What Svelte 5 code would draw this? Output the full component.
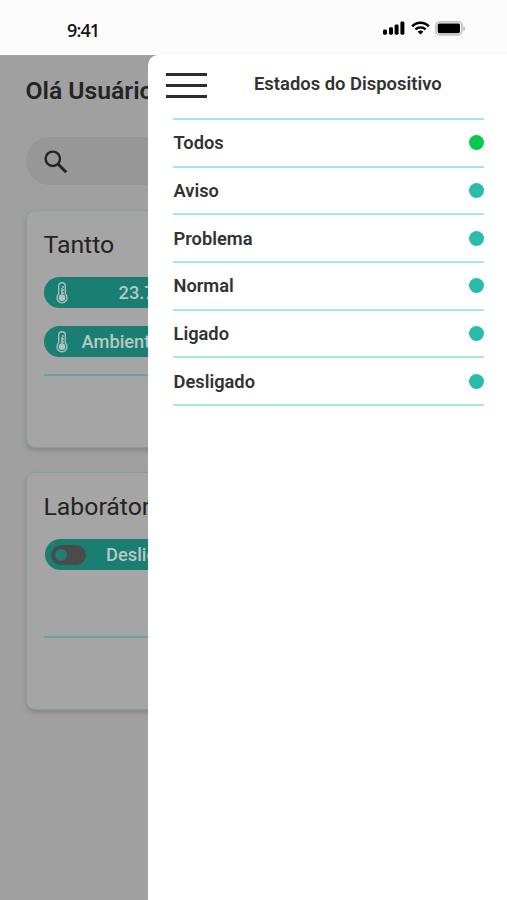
<script>
  const states = [
    { label: 'Todos', active: true },
    { label: 'Aviso' },
    { label: 'Problema' },
    { label: 'Normal' },
    { label: 'Ligado' },
    { label: 'Desligado' }
  ];
</script>

{#snippet thermometer()}
  <svg class="thermo" width="14" height="22" viewBox="0 0 14 22" fill="none">
    <path d="M3.7 12V4a3.3 3.3 0 0 1 6.6 0v8a5 5 0 1 1-6.6 0Z" stroke="#a3bfbb" stroke-width="1.4" />
    <circle cx="7" cy="15.7" r="3.3" fill="#b0c5c2" />
    <path d="M7 15V6M7 5h2M7 8h2M7 11h2" stroke="#a9c3bf" stroke-width="1.6" />
  </svg>
{/snippet}

<div class="phone">
  <header class="status">
    <span class="time">9:41</span>
    <div class="indicators">
      <svg width="22" height="14" viewBox="0 0 22 14">
        <rect x="0" y="8.5" width="4" height="5.2" rx="1.4" />
        <rect x="6" y="6.3" width="4" height="7.4" rx="1.4" />
        <rect x="11.6" y="3.6" width="4" height="10.1" rx="1.4" />
        <rect x="17.4" y="0.5" width="4" height="13.2" rx="1.4" />
      </svg>
      <svg class="wifi" width="19" height="14" viewBox="0 0 19 14" fill="none">
        <path d="M1.2 5.3C5.8 .6 13.2 .6 17.8 5.3" stroke="#000" stroke-width="2.5" />
        <path d="M4.4 8.4c2.9-2.8 7.3-2.8 10.2 0" stroke="#000" stroke-width="2.3" />
        <path d="M6.6 10.7c1.7-1.5 4.1-1.5 5.8 0L9.5 13.6Z" fill="#000" />
      </svg>
      <svg class="battery" width="31" height="15" viewBox="0 0 31 15">
        <rect x=".9" y=".9" width="26" height="13" rx="4" fill="#fff" stroke="#c4c4c4" stroke-width="1.8" />
        <rect x="2.7" y="2.6" width="22.3" height="9.6" rx="1.6" />
        <path d="M28.3 5.2c2.4.7 2.4 3.9 0 4.6Z" fill="#b4b4b4" />
      </svg>
    </div>
  </header>

  <div class="screen">
    <main>
      <h1>Olá Usuário</h1>
      <div class="search">
        <svg width="24" height="24" viewBox="0 0 24 24" fill="none" stroke="#242424">
          <circle cx="8.8" cy="8.8" r="7.2" stroke-width="2.4" />
          <path d="m14 14 8.2 8.2" stroke-width="3" />
        </svg>
      </div>
      <section class="card">
        <h2>Tantto</h2>
        <div class="pill">{@render thermometer()}<span class="reading">23.7 °C</span></div>
        <div class="pill">{@render thermometer()}<span class="ambient">Ambiente</span></div>
        <div class="rule"></div>
      </section>
      <section class="card lab">
        <h2>Laborátorio</h2>
        <div class="pill off"><i class="toggle"></i><span class="switch">Desligado</span></div>
        <div class="rule"></div>
      </section>
    </main>

    <aside>
      <div class="head">
        <button aria-label="Menu"><i></i><i></i><i></i></button>
        <h3>Estados do Dispositivo</h3>
      </div>
      <ul>
        {#each states as state}
          <li><span>{state.label}</span><i class:active={state.active}></i></li>
        {/each}
      </ul>
    </aside>
  </div>
</div>

<style>
  :global(body) { margin: 0; background: #fff; }
  * { box-sizing: border-box; }
  .phone { width: 507px; height: 900px; overflow: hidden; display: flex; flex-direction: column; font-family: Roboto, sans-serif; color: #242424; }
  .status { height: 55px; flex: none; background: #fcfcfc; display: flex; justify-content: space-between; padding: 0 41px 0 67px; }
  .time { font: 600 18px/24px "Open Sans", sans-serif; color: #151515; margin-top: 17.5px; letter-spacing: -0.9px; }
  .indicators { display: flex; margin-top: 20.5px; align-items: flex-start; }
  .wifi { margin-left: 5.5px; }
  .battery { margin-left: 5.5px; }
  .screen { position: relative; flex: 1; background: #a0a0a0; }
  main { padding: 22px 0 0 25.5px; }
  h1 { margin: 0; font-size: 24.7px; line-height: 28px; font-weight: 600; white-space: nowrap; }
  .search { height: 48px; margin-top: 32px; border-radius: 24px; background: #979797; padding: 13px 0 0 18px; width: 457px; }
  .search svg { display: block; }
  .card { width: 457px; height: 238px; margin-top: 25px; border: 1px solid #7fa3a1; border-radius: 9px; background: #a5a5a5; box-shadow: 0 3px 4px #7b7b7b99; padding: 20px 17px 0; }
  .card + .card { margin-top: 24px; }
  h2 { margin: 0; font-size: 24.8px; line-height: 28px; font-weight: 400; }
  .pill { height: 31px; border-radius: 16px; margin-top: 18px; background: #1b7e72; color: #b7c9c6; display: flex; align-items: center; font-size: 18.3px; font-weight: 500; }
  .thermo { margin-left: 11px; flex: none; }
  .reading { margin-left: 50px; }
  .ambient { margin-left: 13px; }
  .off { margin-left: 1px; }
  .toggle { width: 35px; height: 20px; border-radius: 10px; background: #4a4b4b; margin-left: 6px; padding: 4px; }
  .toggle::before { content: ''; display: block; width: 12px; height: 12px; border-radius: 50%; background: #1d7e73; }
  .switch { margin-left: 20.5px; }
  .rule { height: 2px; margin-top: 17px; background: #70a09e; }
  .lab .rule { margin-top: 66px; }
  aside { position: absolute; left: 147.5px; top: 0; right: 0; bottom: 0; background: #fff; border-radius: 10px 0 0 0; color: #323232; }
  .head { height: 63px; display: flex; align-items: flex-start; padding: 18px 0 0 18px; }
  button { border: 0; background: none; padding: 0; width: 41px; display: flex; flex-direction: column; gap: 8px; }
  button i { height: 3px; background: #2d2d2d; }
  h3 { margin: 0 0 0 47.5px; font-size: 18.4px; line-height: 22px; font-weight: 600; }
  ul { list-style: none; margin: 0 23.5px 0 25px; padding: 0; border-top: 2px solid #a5e6ee; }
  li { height: 47.65px; border-bottom: 2px solid #a5e6ee; display: flex; justify-content: space-between; align-items: center; font-size: 18.3px; font-weight: 600; padding-left: 1px; }
  li i { width: 15px; height: 15px; border-radius: 50%; background: #2abbac; }
  li i.active { background: #04c94f; }
</style>
